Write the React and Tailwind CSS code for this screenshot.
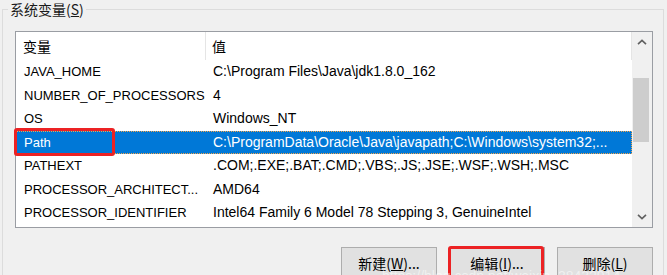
import React from 'react';

const rows = [
  { name: 'JAVA_HOME', value: 'C:\\Program Files\\Java\\jdk1.8.0_162' },
  { name: 'NUMBER_OF_PROCESSORS', value: '4' },
  { name: 'OS', value: 'Windows_NT' },
  { name: 'Path', value: 'C:\\ProgramData\\Oracle\\Java\\javapath;C:\\Windows\\system32;...', selected: true },
  { name: 'PATHEXT', value: '.COM;.EXE;.BAT;.CMD;.VBS;.JS;.JSE;.WSF;.WSH;.MSC' },
  { name: 'PROCESSOR_ARCHITECT...', value: 'AMD64' },
  { name: 'PROCESSOR_IDENTIFIER', value: 'Intel64 Family 6 Model 78 Stepping 3, GenuineIntel' },
];

const Chevron = ({ down }) => (
  <svg width="10" height="6" viewBox="0 0 10 6" className={down ? 'rotate-180' : ''}>
    <path d="M1 5.2 L5 1.4 L9 5.2" fill="none" stroke="#606060" strokeWidth="1.6" />
  </svg>
);

const Button = ({ label, hotkey, dots, marked }) => (
  <div className="relative">
    <button className="w-[96px] h-[32px] bg-[#e1e1e1] border border-[#adadad] text-[14px] text-black flex items-center justify-center">
      {label}(<u>{hotkey}</u>){dots ? '...' : ''}
    </button>
    {/* red annotation box */}
    {marked && (
      <div className="absolute -left-[1px] -top-[1px] w-[96px] h-[40px] border-[3px] border-[#ec2224] rounded-[3px]" />
    )}
  </div>
);

export default function App() {
  return (
    <div className="relative w-[667px] h-[275px] overflow-hidden bg-[#f0f0f0] font-['Liberation_Sans','Noto_Sans_CJK_SC',sans-serif] text-black">
      <fieldset className="ml-[2px] w-[662px] h-[320px] border border-[#dcdcdc]">
        <legend className="ml-[5px] px-[2px] leading-[19px] text-[14px] text-[#1a1a1a] font-['Noto_Sans_CJK_SC',sans-serif]">
          系统变量(<u>S</u>)
        </legend>

        {/* List view */}
        <div className="mt-[12px] ml-[12px] w-[638px] h-[197px] border border-[#9a9da3] bg-white flex">
          <div className="flex-1 flex flex-col">
            <div className="h-[28px] flex text-[14px] font-['Noto_Sans_CJK_SC',sans-serif] border-r border-[#e5e5e5]">
              <div className="w-[190px] pl-[7px] flex items-center border-r border-[#e5e5e5]">变量</div>
              <div className="flex-1 pl-[6px] flex items-center">值</div>
            </div>
            {rows.map((row) => (
              <div
                key={row.name}
                className={`relative h-[23.5px] flex items-center ${row.selected ? 'bg-[#0078d7] text-white outline-1 outline-dotted -outline-offset-1 outline-[#f5a54a]' : ''}`}
              >
                <div className="w-[190px] pl-[8px] text-[13px] whitespace-nowrap">{row.name}</div>
                <div className="flex-1 pl-[7px] text-[14px] whitespace-nowrap">{row.value}</div>
                {row.selected && (
                  <div className="absolute -left-[2px] -top-[3px] w-[101px] h-[28px] border-[3px] border-[#ec2224] rounded-[3px]" />
                )}
              </div>
            ))}
          </div>

          {/* Scrollbar */}
          <div className="w-[20px] bg-[#f0f0f0] flex flex-col">
            <div className="h-[20px] flex items-center justify-center">
              <Chevron />
            </div>
            <div className="flex-1">
              <div className="mt-[26px] ml-[1px] w-[16px] h-[64px] bg-[#cdcdcd]" />
            </div>
            <div className="h-[20px] flex items-center justify-center">
              <Chevron down />
            </div>
          </div>
        </div>

        {/* Buttons */}
        <div className="mt-[19px] ml-[12px] w-[638px] flex justify-end gap-[12px] font-['Noto_Sans_CJK_SC','Liberation_Sans',sans-serif]">
          <Button label="新建" hotkey="W" dots />
          <Button label="编辑" hotkey="I" dots marked />
          <Button label="删除" hotkey="L" />
        </div>
      </fieldset>

      {/* faint watermark, mostly cut off at the bottom edge */}
      <div className="absolute left-[382px] top-[268px] text-[14px] leading-[16px] text-white/50 whitespace-nowrap">
        https://blog.csdn.net/weixin_38432914
      </div>
    </div>
  );
}
